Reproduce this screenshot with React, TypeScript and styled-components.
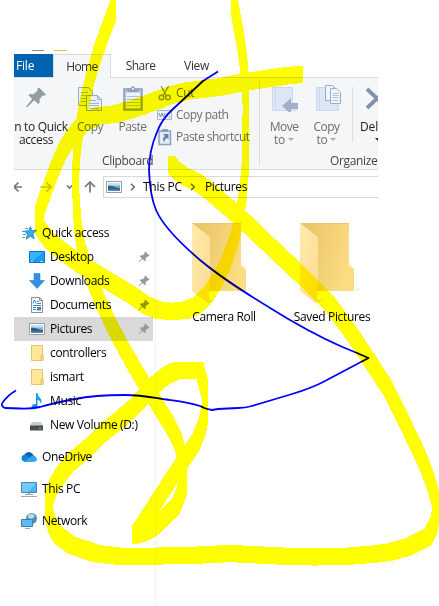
import React from "react";
import styled, { createGlobalStyle } from "styled-components";

const Global = createGlobalStyle`
  html, body { margin: 0; padding: 0; background: #fff; overflow: hidden; }
  * { box-sizing: border-box; }
  svg { display: block; flex: none; }
`;

const Page = styled.div`
  position: relative;
  isolation: isolate;
  width: 439px;
  height: 606px;
  background: #fff;
  overflow: hidden;
  font-family: "Open Sans", "Noto Sans", sans-serif;
  font-size: 12px;
  line-height: 16px;
  color: #000;
  padding: 50px 0 0 14px;
`;

const Explorer = styled.div`
  width: 364px;
  height: 556px;
  overflow: hidden;
  display: flex;
  flex-direction: column;
`;

const Text = styled.span<{ $ls?: number; $indent?: number }>`
  white-space: nowrap;
  letter-spacing: ${(p) => p.$ls ?? -0.35}px;
  padding-left: ${(p) => p.$indent ?? 0}px;
`;

const TitleBar = styled.div`
  height: 4px;
  flex: none;
  display: flex;
  gap: 10px;
  padding-left: 18px;
`;
const TitleMark = styled.i<{ $color: string; $w: number }>`
  height: 1px;
  width: ${(p) => p.$w}px;
  background: ${(p) => p.$color};
`;

const Tabs = styled.div`
  display: flex;
  height: 24px;
  flex: none;
  border-bottom: 1px solid #dadbdc;
  color: #333;
`;
const Tab = styled.div<{ $kind?: "file" | "active"; $w: number }>`
  width: ${(p) => p.$w}px;
  height: ${(p) => (p.$kind === "active" ? 24 : 23)}px;
  display: flex;
  align-items: center;
  justify-content: ${(p) => (p.$kind === "file" ? "flex-start" : "center")};
  padding: ${(p) => (p.$kind === "file" ? "1px 0 0 2px" : p.$kind === "active" ? "0" : "1px 0 0")};
  color: ${(p) => (p.$kind === "file" ? "#fff" : "#333")};
  background: ${(p) => (p.$kind === "file" ? "#0063b1" : p.$kind === "active" ? "#f5f6f7" : "#fff")};
  border: solid #dadbdc;
  border-width: ${(p) => (p.$kind === "active" ? "1px 1px 0 1px" : "0")};
`;

const Ribbon = styled.div`
  height: 92px;
  flex: none;
  display: flex;
  background: #f5f6f7;
  border-bottom: 1px solid #dadbdc;
  color: #6d6d6d;
`;
const Group = styled.div<{ $w: number }>`
  width: ${(p) => p.$w}px;
  flex: none;
  display: flex;
  flex-direction: column;
  justify-content: space-between;
`;
const GroupItems = styled.div`
  display: flex;
  height: 74px;
`;
const GroupTitle = styled.div<{ $pad: number }>`
  padding-left: ${(p) => p.$pad}px;
  color: #444;
`;
const BigButton = styled.div<{ $w: number; $dark?: boolean; $shift?: number }>`
  width: ${(p) => p.$w}px;
  margin-left: ${(p) => p.$shift ?? 0}px;
  flex: none;
  display: flex;
  flex-direction: column;
  align-items: center;
  padding-top: 6px;
  line-height: 13px;
  color: ${(p) => (p.$dark ? "#222" : "#6d6d6d")};
  & > svg { margin-bottom: 8px; }
`;
const DropLine = styled.span`
  display: flex;
  align-items: center;
  gap: 3px;
  min-height: 13px;
`;
const Caret = styled.i<{ $dark?: boolean }>`
  border: 3px solid transparent;
  border-bottom-width: 0;
  border-top-color: ${(p) => (p.$dark ? "#222" : "#aaa")};
`;
const SmallList = styled.div`
  display: flex;
  flex-direction: column;
  padding: 4px 0 0 3px;
`;
const SmallButton = styled.div`
  display: flex;
  height: 22px;
  align-items: center;
  gap: 3px;
`;
const Divider = styled.i<{ $h: number; $mt?: number; $ml?: number }>`
  width: 1px;
  flex: none;
  height: ${(p) => p.$h}px;
  margin-top: ${(p) => p.$mt ?? 2}px;
  margin-left: ${(p) => p.$ml ?? 0}px;
  background: #dcdddf;
`;

const AddressRow = styled.div`
  height: 36px;
  flex: none;
  display: flex;
  align-items: center;
  padding-bottom: 2px;
`;
const NavButtons = styled.div`
  width: 89px;
`;
const AddressBox = styled.div`
  flex: 1;
  height: 22px;
  border: 1px solid #d9d9d9;
  border-right: 0;
  display: flex;
  align-items: center;
  padding-left: 2px;
`;
const Chevron = styled.span<{ $w: number }>`
  width: ${(p) => p.$w}px;
  display: flex;
  justify-content: center;
`;

const Body = styled.div`
  flex: 1;
  display: flex;
  min-height: 0;
`;
const Sidebar = styled.div`
  width: 142px;
  flex: none;
  padding-top: 15px;
  border-right: 1px solid #f3f3f3;
`;
const NavRow = styled.div<{ $child?: boolean; $selected?: boolean; $gap?: number }>`
  display: flex;
  align-items: center;
  width: 139px;
  height: 24px;
  margin-top: ${(p) => p.$gap ?? 0}px;
  padding: 0 3px 0 ${(p) => (p.$child ? 15 : 7)}px;
  gap: 5px;
  background: ${(p) => (p.$selected ? "#d9d9d9" : "transparent")};
`;
const Spacer = styled.span`
  flex: 1;
`;
const Files = styled.div`
  flex: 1;
  display: flex;
  padding: 16px 0 0 14px;
`;
const FileTile = styled.div`
  width: 108px;
  flex: none;
  display: flex;
  flex-direction: column;
  align-items: center;
  gap: 5px;
`;
const Ink = styled.svg<{ $sharp?: boolean }>`
  position: absolute;
  inset: 0;
  pointer-events: none;
  mix-blend-mode: multiply;
  shape-rendering: ${(p) => (p.$sharp ? "crispEdges" : "auto")};
`;

const Pin = () => (
  <svg width="12" height="12" viewBox="0 0 12 12">
    <path d="M7.2.4 11.6 4.8 10.6 5.6 9.8 5.3 7.6 7.5 7.7 9.4 6.8 10.2 4.4 7.9.7 11.6.3 11.2 3.8 7.3 1.8 5.2 2.6 4.3 4.6 4.4 6.7 2.2 6.4 1.3Z" fill="#8e9aa5" />
  </svg>
);
const BigPinIcon = () => (
  <svg width="20" height="28" viewBox="0 0 20 28">
    <path d="m13 3.500 7 7-1.500 1.200-1.500-.5-3.500 4 .3 3.300-1.500 1.500-4-3.800L.8 23.500l-.8-.8L6.200 15 2.500 11.300 4 10l3.500.3 4.200-3.800-.5-1.500z" fill="#929ca3" />
  </svg>
);
const CopyIcon = () => (
  <svg width="26" height="28" viewBox="0 0 26 28" stroke="#9aa9c4" fill="#eaf0fa">
    <path d="M1.500 3.500h10l4 4v14h-14z" />
    <path d="M4 8.500h7m-7 3h9m-9 3h9m-9 3h9" stroke="#a9bcdc" />
    <path d="M9.500 11.500h11l4 4v11h-15z" />
    <path d="M20.500 11.500v4h4M12 16.500h7m-7 3h10m-10 2h10m-10 3h10" fill="none" stroke="#9fb4d8" />
  </svg>
);
const PasteIcon = () => (
  <svg width="22" height="28" viewBox="0 0 22 28">
    <path d="M2 5h18v21H2z" fill="#b4c2da" stroke="#8d9db8" strokeWidth="1.500" />
    <path d="M4 8.500h14V24H4z" fill="#eff4fc" />
    <path d="M4.500 12.500h13m-13 3h13m-13 3h13m-13 3h13" stroke="#afc1df" />
    <path d="M5.500 8V4.500h3l1.500-2h2l1.500 2h3V8z" fill="#93a3bd" />
    <path d="M10 4h2v1.500h-2z" fill="#f5f6f7" />
  </svg>
);
const ScissorsIcon = () => (
  <svg width="16" height="18" viewBox="0 0 16 18" fill="none" stroke="#8c99a9" strokeWidth="1.500">
    <path d="M4 2 9.500 12M11.500 2 6 12" />
    <circle cx="4.500" cy="13.500" r="2.300" /><circle cx="11" cy="13.500" r="2.300" />
  </svg>
);
const PathIcon = () => (
  <svg width="16" height="16" viewBox="0 0 16 16" fill="none">
    <path d="M.5 3.500h14v9H.5z" fill="#e8effa" stroke="#a8b5ca" />
    <path d="m2 6 1.500 4L5 6l1.500 4L8 6M9 10l2-4m1 4h1" stroke="#7e90ac" />
  </svg>
);
const ShortcutIcon = () => (
  <svg width="16" height="18" viewBox="0 0 16 18">
    <path d="M2 3h11.500v13.500H2z" fill="#e3ebf7" stroke="#8e9fba" strokeWidth="1.500" />
    <path d="M5 1h6v3H5z" fill="#8e9fba" />
    <path d="M6 6h5.500v5.500L9.800 9.800Q7.500 11.500 7 14 4.500 11 8 8Z" fill="#6881a9" />
  </svg>
);
const MoveIcon = ({ copy }: { copy?: boolean }) => (
  <svg width="28" height="28" viewBox="0 0 28 28">
    {copy ? (
      <>
        <path d="M3.500 3.500h18v14l4 3v6h-22z" fill="#dce6f5" stroke="#cad8ed" />
        <path d="M6.500 4v22" stroke="#cbd9ed" />
        <g fill="#f0f5fc" stroke="#9aacca">
          <path d="M12.500 1.500h7l3 3v12h-10z" /><path d="M17.500 4.500h6l4 4v11h-10z" />
          <path d="M19.500 9.500h6m-6 2h6m-6 2h6m-6 3h6" stroke="#afc0dc" />
        </g>
      </>
    ) : (
      <>
        <path d="M2.500 3.500h20v14l4 4v5h-24z" fill="#dce6f5" stroke="#cad8ed" />
        <path d="M5.500 4v22" stroke="#cbd9ed" />
        <path d="m12 22 9-8v5h7v6h-7v5z" fill="#a1b0c8" />
      </>
    )}
  </svg>
);
const DeleteIcon = () => (
  <svg width="26" height="28" viewBox="0 0 26 28">
    <path d="m2 5 20 19M22 5 2 24" stroke="#8291b2" strokeWidth="3.800" />
  </svg>
);
const NavArrows = () => (
  <svg width="89" height="22" viewBox="0 0 89 22" fill="none" stroke="#777" strokeWidth="1.700">
    <path d="M8 11H0M4.500 6.500 0 11l4.500 4.500" />
    <path d="M26 11h11m-4.500-4.500L37 11l-4.500 4.500" stroke="#c6c6c6" />
    <path d="m53 9.500 2.500 2.500L58 9.500M76 16.500V6m-5 5 5-5 5 5" />
  </svg>
);
const PictureIcon = () => (
  <svg width="16" height="14" viewBox="0 0 16 14">
    <path d="M.5 1.500h15v11H.5z" fill="#fff" stroke="#989ea4" />
    <path d="M2 3h12v8H2z" fill="#75b9e7" /><path d="M2 6q3-1.500 7 1 3 1 5 1V11H2z" fill="#32617b" />
    <path d="M2 3h12v2Q8 6 2 5Z" fill="#c3e2f5" /><path d="M2 9.500h12V11H2z" fill="#5689b4" />
  </svg>
);
const StarIcon = () => (
  <svg width="16" height="16" viewBox="0 0 16 16">
    <path d="m9.500 1.500 1.500 4.200 4.500-.5-3.500 3.600 1.200 5-4-2.500-4 3 1.300-5L3.500 6l4-.3z" fill="#39a9ea" stroke="#2583c5" strokeWidth=".8" />
    <path d="M4 3.500h3M1 6.500h3M2 9.500h3M1 12.500h3" stroke="#2583c5" strokeWidth=".8" />
  </svg>
);
const MonitorIcon = () => (
  <svg width="16" height="16" viewBox="0 0 16 16">
    <path d="M.5 1.500h15v10H.5z" fill="#4ab5f5" stroke="#4689b2" /><path d="M1 2h14L7 11H1z" fill="#72caff" />
    <path d="M7 12h2v1H7zM4 13h8v1H4zM0 15h16v1H0z" fill="#9da9b3" />
  </svg>
);
const DesktopIcon = () => (
  <svg width="16" height="14" viewBox="0 0 16 14">
    <path d="M.5 1.500h15v11H.5z" fill="#189df1" stroke="#0876c3" /><path d="M1 2h13L4 11H1z" fill="#35b4ff" />
    <path d="M2 11.500h2m7 0h3" stroke="#9ad7ff" />
  </svg>
);
const DownloadIcon = () => (
  <svg width="16" height="16" viewBox="0 0 16 16"><path d="M5 .5h6v7h4.500L8 15.500.5 7.500H5z" fill="#3491df" stroke="#2d7fca" strokeWidth=".6" /></svg>
);
const DocumentIcon = () => (
  <svg width="16" height="16" viewBox="0 0 16 16">
    <path d="M2.500.5h8l3 3v12h-11z" fill="#fff" stroke="#8a8f93" /><path d="M10.500.5v3h3" fill="none" stroke="#8a8f93" />
    <path d="M4 6.500 5.500 3 7 6.500M8 4.500h2M8 6.500h4M4 8.500h8m-8 2h3m-3 2h3" fill="none" stroke="#2c8cce" /><path d="M8 10h4v3.500H8z" fill="#4a8791" />
  </svg>
);
const SmallFolderIcon = () => (
  <svg width="16" height="16" viewBox="0 0 16 16">
    <path d="M2.500.5h11v9l.5 1v5H2.500z" fill="#ffe699" stroke="#e6c36a" /><path d="M12 10.500q0-1 1-1h1v6h-2z" fill="#f7d67b" stroke="#e6c36a" />
  </svg>
);
const MusicIcon = () => (
  <svg width="16" height="16" viewBox="0 0 16 16">
    <path d="M7 0h1.500q.3 3 2.500 5 2.500 2.500.8 6-.3-3.500-3.300-4.500v6.700q-.3 2.800-3.300 2.800-2.700-.3-2.700-2.500.5-2.800 4.500-2.500z" fill="#119bf0" />
  </svg>
);
const DriveIcon = () => (
  <svg width="16" height="16" viewBox="0 0 16 16">
    <path d="M3 5h9l2.500 4H.5z" fill="#c9cccd" /><path d="M1 8.500h13v5H1z" fill="#4b4f52" /><path d="M10 11h2v1h-2z" fill="#3bf04c" />
  </svg>
);
const CloudIcon = () => (
  <svg width="16" height="16" viewBox="0 0 16 16">
    <path d="M3.500 12.500A3.500 3.500 0 0 1 3 6Q5 3 8 3q3.500.5 4.500 3.500L14 12z" fill="#0b62b8" />
    <path d="M.6 8Q2 5 5.500 6L12 12.500H3.500Q0 12 .6 8z" fill="#1284d9" />
    <path d="M4 12.500 9 8q4-3 6 0 2.500 4-1.500 4.800z" fill="#28a8ea" />
  </svg>
);
const NetworkIcon = () => (
  <svg width="16" height="16" viewBox="0 0 16 16">
    <circle cx="10.500" cy="5.500" r="5.500" fill="#568bb0" /><path d="M7 2q4-3 7 1l-3 3-4-1z" fill="#b7dbe6" />
    <path d="M.5 6.500h11v7H.5z" fill="#58bef8" stroke="#3d80aa" /><path d="M4 15.500h5" stroke="#9caab5" />
  </svg>
);
const FolderIcon = ({ id }: { id: string }) => (
  <svg width="66" height="82" viewBox="0 0 66 82">
    <defs>
      <linearGradient id={`b${id}`} x1="0" y1="0" x2="1" y2=".3"><stop offset="0" stopColor="#e8c261" /><stop offset="1" stopColor="#fbdc83" /></linearGradient>
      <linearGradient id={`f${id}`} x1="0" y1="0" x2="1" y2="1"><stop offset="0" stopColor="#ffeaae" /><stop offset="1" stopColor="#fbdc91" /></linearGradient>
    </defs>
    <path d="m55 69 7-2-4-1zM18 81l7-3-7 0z" fill="#eceae6" />
    <path d="M1 1h49v42l5 4v22H1z" fill={`url(#b${id})`} />
    <path d="M1 1.500h49" stroke="#ecc96f" />
    <path d="m1 1 18 14v51l-1 2v13q-2 0-4-2L1 69z" fill={`url(#f${id})`} />
  </svg>
);

const ArrowGlyph = () => (
  <svg width="6" height="8" viewBox="0 0 6 8"><path d="m1 .7 3.300 3.300L1 7.300" fill="none" stroke="#666" strokeWidth="1.400" /></svg>
);

type Pt = [number, number];

/* Area covered by a 6x17 chisel nib dragged along a polyline. */
const chisel = (pts: Pt[]) => {
  const hw = 3.3;
  const hh = 8.5;
  return pts
    .slice(1)
    .map(([bx, by], i) => {
      let [ax, ay] = pts[i];
      if (bx < ax) [ax, ay, bx, by] = [bx, by, ax, ay];
      const poly: Pt[] =
        by >= ay
          ? [[ax - hw, ay - hh], [ax + hw, ay - hh], [bx + hw, by - hh], [bx + hw, by + hh], [bx - hw, by + hh], [ax - hw, ay + hh]]
          : [[ax - hw, ay - hh], [bx - hw, by - hh], [bx + hw, by - hh], [bx + hw, by + hh], [ax + hw, ay + hh], [ax - hw, ay + hh]];
      return `M${poly.map((p) => p.join(" ")).join("L")}Z`;
    })
    .join("");
};

const strokes: Pt[][] = [
  [[300, 74.5], [285, 76], [265, 79], [245, 82], [220, 87], [187, 91], [168, 96], [150, 103], [133, 109], [115, 114], [98, 116], [85, 122], [72, 136], [63, 150], [55, 168], [48, 187], [42, 204], [38.500, 215], [38.500, 225], [42, 231], [50, 241], [62, 251], [80, 264], [105, 279], [130, 294], [146, 305], [158, 310], [170, 311.500], [185, 310.500], [196, 306], [207, 296], [217, 281], [226, 263], [234, 241], [239, 220], [243, 195], [245.500, 165], [246, 100], [245, 75], [241, 43], [235, 10], [234, 0]],
  [[113, 0], [113, 11], [107, 27], [98, 52], [91, 75], [85, 100], [80, 125], [77, 150], [75.500, 175], [76, 200], [78, 228], [82, 252], [91, 278], [101, 303], [115, 332], [128, 356], [142, 380], [157, 404], [170, 425], [178, 441], [182, 457], [184, 472], [183.500, 487], [176, 506], [165, 517], [153, 528], [143, 533], [135, 535], [146, 518], [170, 481], [185, 458.500], [196, 442], [202, 427], [205, 413], [205, 390], [203.500, 384], [200, 371], [177, 370.500], [166, 375.500], [153, 386.500], [133, 408], [118, 421], [103, 433], [88, 448], [70, 463], [60, 476], [53, 487], [48, 502], [48, 511], [52, 525], [57, 534], [71, 545], [96, 553.500], [121, 556.500], [160, 556], [200, 555], [230, 553.500], [280, 556], [315, 557], [345, 556.500], [375, 554], [390, 552], [408, 547], [428, 537], [434, 525], [436.500, 510], [435, 497], [431, 483], [425, 466], [416, 446], [402, 417], [387, 387], [370, 361], [352, 334], [330, 304], [300, 274], [270, 246], [242, 219], [222, 202], [208, 190], [197, 182], [184, 176], [176, 170], [171.500, 164.500]],
];

const penPath =
  "M218 71.500 203 81 172 110Q162 119 157 132 149 151 149 170 150 196 156 210C163 226 180 243 200 260 230 285 264 304 290 320Q326 341 357 353L368.500 358 Q346 370 325 381C314 387 302 391 292 394L252 406Q245 408 238 408L218 409 212 410Q205 409 200 406C188 402 177 401 166 399.500 154 398 144 395 125 395Q94 395 75 399 54 403 40 407 30 409 20 408.500L5 408Q0 406 3 402 8 395 16 390.500";

export default function App() {
  return (
    <>
      <Global />
      <Page>
        <Explorer>
          <TitleBar><TitleMark $color="#8b8b8b" $w={12} /><TitleMark $color="#e7bd4b" $w={13} /></TitleBar>
          <Tabs>
            <Tab $kind="file" $w={39}><Text $ls={-0.2}>File</Text></Tab>
            <Tab $kind="active" $w={58}><Text $ls={-0.6}>Home</Text></Tab>
            <Tab $w={59}><Text $ls={-0.5}>Share</Text></Tab>
            <Tab $w={53}><Text>View</Text></Tab>
          </Tabs>
          <Ribbon>
            <Group $w={245}>
              <GroupItems>
                <BigButton $w={44} $dark>
                  <BigPinIcon />
                  <Text $ls={-0.35} $indent={10}>n to Quick</Text><Text>access</Text>
                </BigButton>
                <BigButton $w={42} $shift={11}><CopyIcon /><Text $ls={-0.5}>Copy</Text></BigButton>
                <BigButton $w={43}><PasteIcon /><Text $ls={-0.5}>Paste</Text></BigButton>
                <SmallList>
                  <SmallButton><ScissorsIcon /><Text>Cut</Text></SmallButton>
                  <SmallButton><PathIcon /><Text $ls={-0.5}>Copy path</Text></SmallButton>
                  <SmallButton><ShortcutIcon /><Text $ls={-0.5}>Paste shortcut</Text></SmallButton>
                </SmallList>
              </GroupItems>
              <GroupTitle $pad={88}><Text>Clipboard</Text></GroupTitle>
            </Group>
            <Divider $h={86} />
            <Group $w={119}>
              <GroupItems>
                <BigButton $w={46} $shift={1}><MoveIcon /><Text $ls={-0.5}>Move</Text><DropLine><Text>to</Text><Caret /></DropLine></BigButton>
                <BigButton $w={39}><MoveIcon copy /><Text $ls={-0.5}>Copy</Text><DropLine><Text>to</Text><Caret /></DropLine></BigButton>
                <Divider $h={55} $mt={9} $ml={6} />
                <BigButton $w={46} $shift={2} $dark><DeleteIcon /><Text $ls={0}>Delete</Text><DropLine><Caret $dark /></DropLine></BigButton>
              </GroupItems>
              <GroupTitle $pad={70}><Text>Organize</Text></GroupTitle>
            </Group>
          </Ribbon>
          <AddressRow>
            <NavButtons><NavArrows /></NavButtons>
            <AddressBox>
              <PictureIcon /><Chevron $w={21}><ArrowGlyph /></Chevron><Text $ls={-0.25}>This PC</Text>
              <Chevron $w={23}><ArrowGlyph /></Chevron><Text>Pictures</Text>
            </AddressBox>
          </AddressRow>
          <Body>
            <Sidebar>
              <NavRow><StarIcon /><Text>Quick access</Text></NavRow>
              <NavRow $child><DesktopIcon /><Text>Desktop</Text><Spacer /><Pin /></NavRow>
              <NavRow $child><DownloadIcon /><Text>Downloads</Text><Spacer /><Pin /></NavRow>
              <NavRow $child><DocumentIcon /><Text>Documents</Text><Spacer /><Pin /></NavRow>
              <NavRow $child $selected><PictureIcon /><Text>Pictures</Text><Spacer /><Pin /></NavRow>
              <NavRow $child><SmallFolderIcon /><Text>controllers</Text></NavRow>
              <NavRow $child><SmallFolderIcon /><Text>ismart</Text></NavRow>
              <NavRow $child><MusicIcon /><Text>Music</Text></NavRow>
              <NavRow $child><DriveIcon /><Text>New Volume (D:)</Text></NavRow>
              <NavRow $gap={8}><CloudIcon /><Text>OneDrive</Text></NavRow>
              <NavRow $gap={8}><MonitorIcon /><Text>This PC</Text></NavRow>
              <NavRow $gap={8}><NetworkIcon /><Text>Network</Text></NavRow>
            </Sidebar>
            <Files>
              <FileTile><FolderIcon id="a" /><Text>Camera Roll</Text></FileTile>
              <FileTile><FolderIcon id="b" /><Text>Saved Pictures</Text></FileTile>
            </Files>
          </Body>
        </Explorer>
        <Ink $sharp width="439" height="606" viewBox="0 0 439 606">
          <path d={strokes.map(chisel).join("")} fill="#ff0" />
        </Ink>
        <Ink width="439" height="606" viewBox="0 0 439 606">
          <path d={penPath} fill="none" stroke="#00f" strokeWidth="1.800" strokeLinejoin="round" />
        </Ink>
      </Page>
    </>
  );
}
